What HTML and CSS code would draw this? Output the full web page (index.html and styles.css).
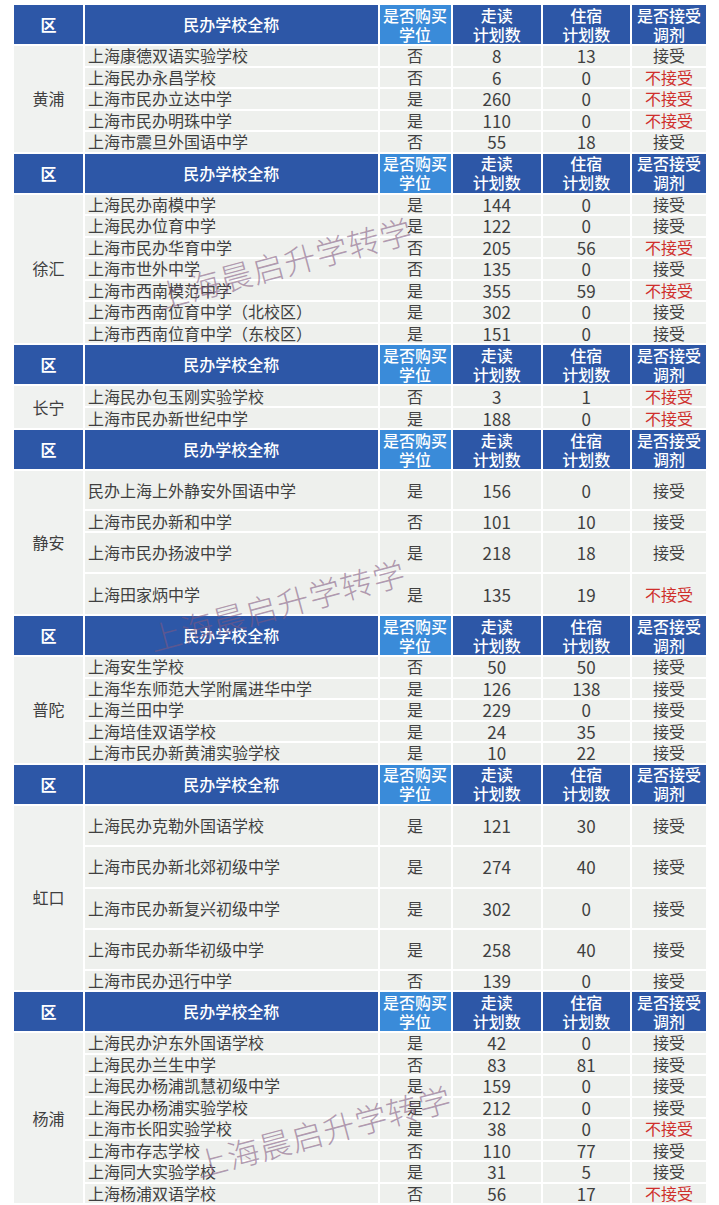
FILE: index.html
```html
<!DOCTYPE html>
<html lang="zh-CN">
<head>
<meta charset="utf-8">
<title>上海民办学校招生计划</title>
<link rel="stylesheet" href="styles.css">
</head>
<body>
<div class="page">
<table class="plan">
<colgroup>
<col class="c-dist"><col class="c-name"><col class="c-buy"><col class="c-walk"><col class="c-board"><col class="c-adj">
</colgroup>
<tbody>
<tr class="head"><th class="h-dist">区</th><th>民办学校全称</th><th class="h-buy">是否购买<br>学位</th><th>走读<br>计划数</th><th>住宿<br>计划数</th><th>是否接受<br>调剂</th></tr>
<tr class="r"><td class="dist" rowspan="5">黄浦</td><td class="name">上海康德双语实验学校</td><td>否</td><td class="num">8</td><td class="num">13</td><td>接受</td></tr>
<tr class="r"><td class="name">上海民办永昌学校</td><td>否</td><td class="num">6</td><td class="num">0</td><td class="no">不接受</td></tr>
<tr class="r"><td class="name">上海市民办立达中学</td><td>是</td><td class="num">260</td><td class="num">0</td><td class="no">不接受</td></tr>
<tr class="r"><td class="name">上海市民办明珠中学</td><td>是</td><td class="num">110</td><td class="num">0</td><td class="no">不接受</td></tr>
<tr class="r"><td class="name">上海市震旦外国语中学</td><td>否</td><td class="num">55</td><td class="num">18</td><td>接受</td></tr>

<tr class="head"><th class="h-dist">区</th><th>民办学校全称</th><th class="h-buy">是否购买<br>学位</th><th>走读<br>计划数</th><th>住宿<br>计划数</th><th>是否接受<br>调剂</th></tr>
<tr class="r"><td class="dist" rowspan="7">徐汇</td><td class="name">上海民办南模中学</td><td>是</td><td class="num">144</td><td class="num">0</td><td>接受</td></tr>
<tr class="r"><td class="name">上海民办位育中学</td><td>是</td><td class="num">122</td><td class="num">0</td><td>接受</td></tr>
<tr class="r"><td class="name">上海市民办华育中学</td><td>否</td><td class="num">205</td><td class="num">56</td><td class="no">不接受</td></tr>
<tr class="r"><td class="name">上海市世外中学</td><td>否</td><td class="num">135</td><td class="num">0</td><td>接受</td></tr>
<tr class="r"><td class="name">上海市西南模范中学</td><td>是</td><td class="num">355</td><td class="num">59</td><td class="no">不接受</td></tr>
<tr class="r"><td class="name">上海市西南位育中学（北校区）</td><td>是</td><td class="num">302</td><td class="num">0</td><td>接受</td></tr>
<tr class="r"><td class="name">上海市西南位育中学（东校区）</td><td>是</td><td class="num">151</td><td class="num">0</td><td>接受</td></tr>

<tr class="head"><th class="h-dist">区</th><th>民办学校全称</th><th class="h-buy">是否购买<br>学位</th><th>走读<br>计划数</th><th>住宿<br>计划数</th><th>是否接受<br>调剂</th></tr>
<tr class="r2"><td class="dist" rowspan="2">长宁</td><td class="name">上海民办包玉刚实验学校</td><td>否</td><td class="num">3</td><td class="num">1</td><td class="no">不接受</td></tr>
<tr class="r2"><td class="name">上海市民办新世纪中学</td><td>是</td><td class="num">188</td><td class="num">0</td><td class="no">不接受</td></tr>

<tr class="head"><th class="h-dist">区</th><th>民办学校全称</th><th class="h-buy">是否购买<br>学位</th><th>走读<br>计划数</th><th>住宿<br>计划数</th><th>是否接受<br>调剂</th></tr>
<tr class="ja1"><td class="dist" rowspan="4">静安</td><td class="name">民办上海上外静安外国语中学</td><td>是</td><td class="num">156</td><td class="num">0</td><td>接受</td></tr>
<tr class="ja2"><td class="name">上海市民办新和中学</td><td>否</td><td class="num">101</td><td class="num">10</td><td>接受</td></tr>
<tr class="ja3"><td class="name">上海市民办扬波中学</td><td>是</td><td class="num">218</td><td class="num">18</td><td>接受</td></tr>
<tr class="ja4"><td class="name">上海田家炳中学</td><td>是</td><td class="num">135</td><td class="num">19</td><td class="no">不接受</td></tr>

<tr class="head"><th class="h-dist">区</th><th>民办学校全称</th><th class="h-buy">是否购买<br>学位</th><th>走读<br>计划数</th><th>住宿<br>计划数</th><th>是否接受<br>调剂</th></tr>
<tr class="r"><td class="dist" rowspan="5">普陀</td><td class="name">上海安生学校</td><td>否</td><td class="num">50</td><td class="num">50</td><td>接受</td></tr>
<tr class="r"><td class="name">上海华东师范大学附属进华中学</td><td>是</td><td class="num">126</td><td class="num">138</td><td>接受</td></tr>
<tr class="r"><td class="name">上海兰田中学</td><td>是</td><td class="num">229</td><td class="num">0</td><td>接受</td></tr>
<tr class="r"><td class="name">上海培佳双语学校</td><td>是</td><td class="num">24</td><td class="num">35</td><td>接受</td></tr>
<tr class="r"><td class="name">上海市民办新黄浦实验学校</td><td>是</td><td class="num">10</td><td class="num">22</td><td>接受</td></tr>

<tr class="head"><th class="h-dist">区</th><th>民办学校全称</th><th class="h-buy">是否购买<br>学位</th><th>走读<br>计划数</th><th>住宿<br>计划数</th><th>是否接受<br>调剂</th></tr>
<tr class="tall"><td class="dist" rowspan="5">虹口</td><td class="name">上海民办克勒外国语学校</td><td>是</td><td class="num">121</td><td class="num">30</td><td>接受</td></tr>
<tr class="tall2"><td class="name">上海市民办新北郊初级中学</td><td>是</td><td class="num">274</td><td class="num">40</td><td>接受</td></tr>
<tr class="tall"><td class="name">上海市民办新复兴初级中学</td><td>是</td><td class="num">302</td><td class="num">0</td><td>接受</td></tr>
<tr class="tall"><td class="name">上海市民办新华初级中学</td><td>是</td><td class="num">258</td><td class="num">40</td><td>接受</td></tr>
<tr class="r"><td class="name">上海市民办迅行中学</td><td>否</td><td class="num">139</td><td class="num">0</td><td>接受</td></tr>

<tr class="head"><th class="h-dist">区</th><th>民办学校全称</th><th class="h-buy">是否购买<br>学位</th><th>走读<br>计划数</th><th>住宿<br>计划数</th><th>是否接受<br>调剂</th></tr>
<tr class="r"><td class="dist" rowspan="8">杨浦</td><td class="name">上海民办沪东外国语学校</td><td>是</td><td class="num">42</td><td class="num">0</td><td>接受</td></tr>
<tr class="r"><td class="name">上海民办兰生中学</td><td>否</td><td class="num">83</td><td class="num">81</td><td>接受</td></tr>
<tr class="r"><td class="name">上海民办杨浦凯慧初级中学</td><td>是</td><td class="num">159</td><td class="num">0</td><td>接受</td></tr>
<tr class="r"><td class="name">上海民办杨浦实验学校</td><td>是</td><td class="num">212</td><td class="num">0</td><td>接受</td></tr>
<tr class="r"><td class="name">上海市长阳实验学校</td><td>是</td><td class="num">38</td><td class="num">0</td><td class="no">不接受</td></tr>
<tr class="r"><td class="name">上海市存志学校</td><td>否</td><td class="num">110</td><td class="num">77</td><td>接受</td></tr>
<tr class="r"><td class="name">上海同大实验学校</td><td>是</td><td class="num">31</td><td class="num">5</td><td>接受</td></tr>
<tr class="r"><td class="name">上海杨浦双语学校</td><td>否</td><td class="num">56</td><td class="num">17</td><td class="no">不接受</td></tr>
<tr class="head"><th class="h-dist"></th><th></th><th class="h-buy"></th><th></th><th></th><th></th></tr>
</tbody>
</table>

<div class="wm wm1">上海晨启升学转学</div>
<div class="wm wm2">上海晨启升学转学</div>
<div class="wm wm3">上海晨启升学转学</div>
</div>
</body>
</html>
```
FILE: styles.css
```css
html, body {
  margin: 0;
  padding: 0;
  background: #ffffff;
}

body {
  font-family: "Noto Sans CJK SC", "Noto Sans", sans-serif;
  color: #404040;
  overflow: hidden;
}

.page {
  position: relative;
  width: 719px;
  height: 1205px;
  overflow: hidden;
}

.plan {
  border-collapse: separate;
  border-spacing: 2px;
  table-layout: fixed;
  width: 696px;
  margin: 3px 0 0 12px;
  font-size: 16px;
  line-height: 19px;
}

.c-dist { width: 69px; }
.c-name { width: 292px; }
.c-buy { width: 71px; }
.c-walk { width: 88px; }
.c-board { width: 87px; }
.c-adj { width: 74px; }

.plan th {
  background: #2d57a7;
  color: #ffffff;
  font-weight: 500;
  padding: 0;
  text-align: center;
  vertical-align: middle;
  line-height: 19px;
  white-space: nowrap;
}

.plan th.h-dist { font-weight: 700; }
.plan th.h-buy { background: #3a8bd9; }

.head { height: 39px; }

.plan td {
  background: #eef0ed;
  padding: 0;
  text-align: center;
  vertical-align: middle;
  white-space: nowrap;
}

.plan td.name {
  text-align: left;
  padding-left: 3px;
}

.plan td.dist {
  background: #f0f2f0;
}

.plan td.num {
  font-family: "Liberation Sans Narrow", "Noto Sans CJK SC", sans-serif;
  font-size: 17px;
}

.plan td.no {
  color: #cf2f2c;
}

.r { height: 19.5px; }
.r2 { height: 20px; }
.ja1 { height: 38px; }
.ja2 { height: 20px; }
.ja3 { height: 39px; }
.ja4 { height: 40px; }
.tall { height: 39px; }
.tall2 { height: 40px; }

.wm {
  position: absolute;
  font-family: "Noto Sans CJK SC", sans-serif;
  font-weight: 300;
  font-size: 32px;
  line-height: 32px;
  letter-spacing: 1px;
  color: rgba(128, 88, 128, 0.58);
  white-space: nowrap;
  transform: translate(-50%, -50%) rotate(-15deg);
  pointer-events: none;
}

.wm1 { left: 284px; top: 262px; }
.wm2 { left: 277px; top: 604px; }
.wm3 { left: 323px; top: 1130px; }
```
